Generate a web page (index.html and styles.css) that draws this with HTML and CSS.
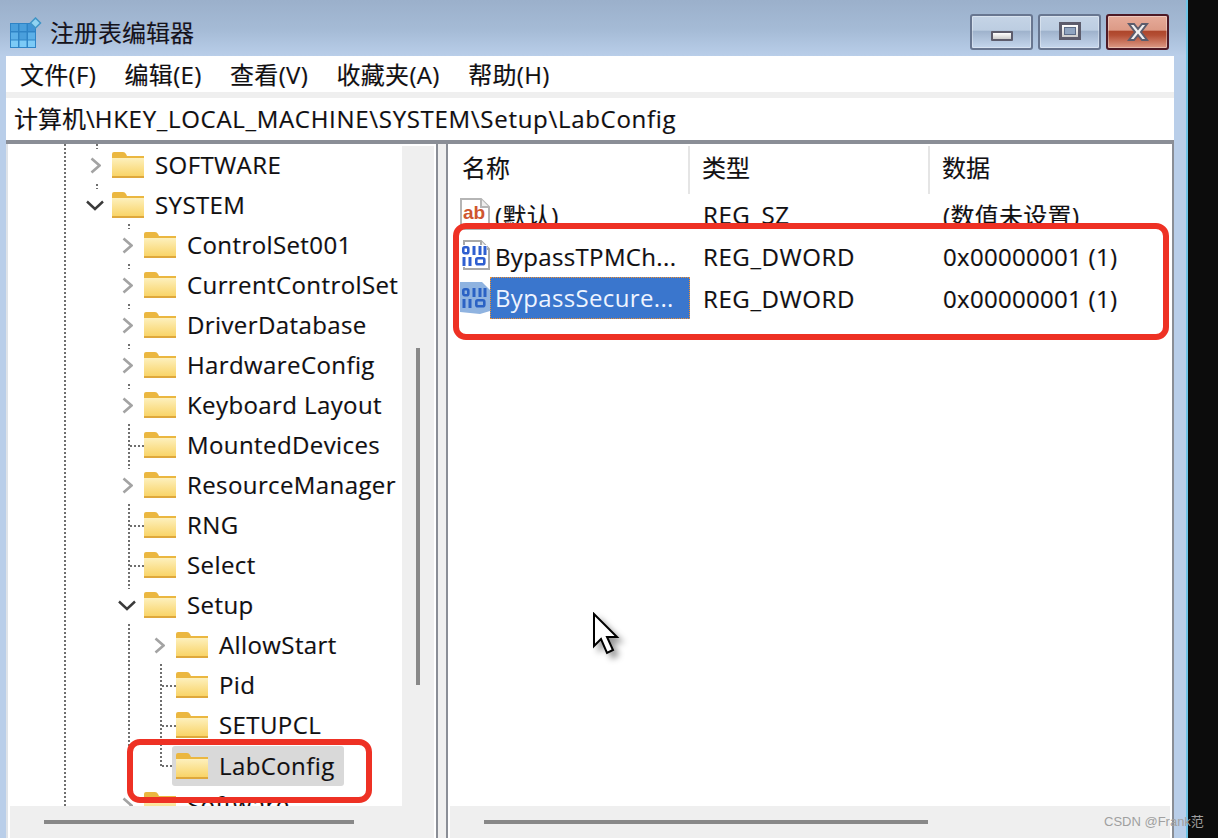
FILE: index.html
```html
<!DOCTYPE html>
<html lang="zh-CN">
<head>
<meta charset="utf-8">
<title>注册表编辑器</title>
<link rel="stylesheet" href="styles.css">
</head>
<body>
<svg class="defs" width="0" height="0" aria-hidden="true">
  <defs>
    <linearGradient id="fold" x1="0" y1="0" x2="0" y2="1">
      <stop offset="0" stop-color="#fdf0bd"/><stop offset="1" stop-color="#f9d468"/>
    </linearGradient>
    <symbol id="folder" viewBox="0 0 32 26">
      <path d="M0 2 Q0 0 2 0 H11 Q13 0 14 2 L15 4 H32 V8 H0Z" fill="#ebb740"/>
      <rect x="0" y="6" width="32" height="18" fill="url(#fold)"/>
      <rect x="0" y="24" width="32" height="2" fill="#dfa83c"/>
    </symbol>
    <symbol id="chev-r" viewBox="0 0 11 17">
      <path d="M1.500 1.500 L9.500 8.500 L1.500 15.500" fill="none" stroke="#a3a3a3" stroke-width="2.600"/>
    </symbol>
    <symbol id="chev-d" viewBox="0 0 18 11">
      <path d="M1 1.500 L9 9 L17 1.500" fill="none" stroke="#3a3a3a" stroke-width="2.400"/>
    </symbol>
    <symbol id="bin" viewBox="0 0 30 32">
      <path d="M4 1 H21 L29 9 V29 H4Z" fill="#fff" stroke="#a9a9a9" stroke-width="2"/>
      <path d="M21 1 V9 H29" fill="#eee" stroke="#a9a9a9" stroke-width="2"/>
      <rect x="1" y="5" width="26" height="22" fill="#fff"/>
      <g fill="none" stroke="#2f5fd0" stroke-width="2.600">
        <rect x="3.300" y="7.300" width="5" height="6" rx="1.500"/>
        <path d="M14 6 V15 M20 6 V15 M25 6 V15" stroke-width="3"/>
        <path d="M4 17 V26 M10 17 V26" stroke-width="3"/>
        <rect x="16.300" y="18.300" width="8" height="6" rx="1.500"/>
      </g>
    </symbol>
    <symbol id="bin-sel" viewBox="0 0 30 32">
      <path d="M0 0 H22 L30 8 V29 L20 32 L0 30Z" fill="#8fb3e0"/>
      <g fill="none" stroke="#2b62c4" stroke-width="2.600">
        <rect x="3.300" y="7.300" width="5" height="6" rx="1.500"/>
        <path d="M14 6 V15 M20 6 V15 M25 6 V15" stroke-width="3"/>
        <path d="M4 17 V26 M10 17 V26" stroke-width="3"/>
        <rect x="16.300" y="18.300" width="8" height="6" rx="1.500"/>
      </g>
    </symbol>
  </defs>
</svg>

<div class="window">
  <header class="titlebar">
    <svg class="app-icon" width="32" height="32" viewBox="0 0 32 32" aria-hidden="true">
      <rect x="0" y="6" width="26" height="25" fill="#2f84c6"/>
      <rect x="1" y="7" width="7" height="7" fill="#4a9fdc"/><rect x="9.500" y="7" width="7" height="7" fill="#4a9fdc"/><rect x="18" y="7" width="7" height="7" fill="#3f94d6"/>
      <rect x="1" y="15.500" width="7" height="7" fill="#5cb0e8"/><rect x="9.500" y="15.500" width="7" height="7" fill="#4a9fdc"/><rect x="18" y="15.500" width="7" height="7" fill="#5cb0e8"/>
      <rect x="1" y="23.500" width="7" height="6.500" fill="#7ccaf6"/><rect x="9.500" y="23.500" width="7" height="6.500" fill="#7ccaf6"/><rect x="18" y="23.500" width="7" height="6.500" fill="#7ccaf6"/>
      <path d="M25.500 1 L30.500 6 L25.500 11 L20.500 6Z" fill="#8fd3f2" stroke="#3f94c6" stroke-width="1.500"/>
    </svg>
    <span class="title-text">注册表编辑器</span>
    <div class="win-btns">
      <div class="win-btn"><span class="glyph-min"></span></div>
      <div class="win-btn"><span class="glyph-max"></span></div>
      <div class="win-btn win-close">
        <svg width="24" height="20" viewBox="0 0 24 20" aria-hidden="true">
          <path d="M3 2 H8 L12 7 L16 2 H21 L15 10 L21 18 H16 L12 13 L8 18 H3 L9 10Z" fill="#f0f0f0" stroke="#5c5c6c" stroke-width="2"/>
        </svg>
      </div>
    </div>
  </header>

  <div class="client">
    <nav class="menubar">
      <span class="menu-item">文件(F)</span>
      <span class="menu-item">编辑(E)</span>
      <span class="menu-item">查看(V)</span>
      <span class="menu-item">收藏夹(A)</span>
      <span class="menu-item">帮助(H)</span>
    </nav>
    <div class="strip"></div>
    <div class="address"><span>计算机\</span><span class="addr-path">HKEY_LOCAL_MACHINE\SYSTEM\Setup\LabConfig</span></div>

    <div class="panes">
      <section class="left-pane">
        <div class="tree-wrap">
          <div class="tree">
            <svg class="connectors" width="180" height="662" viewBox="0 0 180 662" aria-hidden="true">
              <g fill="none" stroke="#6f6f6f" stroke-width="2" stroke-dasharray="2 2">
                <path d="M57 0 V662"/>
                <path d="M89 0 V50"/>
                <path d="M121 80 V662"/>
                <path d="M122 302 H136 M122 382 H136 M122 422 H136"/>
                <path d="M153 520 V623"/>
                <path d="M154 542 H168 M154 582 H168 M154 622 H168"/>
              </g>
            </svg>
            <div class="row d1"><span class="exp"><svg width="11" height="17"><use href="#chev-r"/></svg></span><span class="node"><svg class="fld" width="32" height="26"><use href="#folder"/></svg><span class="lbl">SOFTWARE</span></span></div>
            <div class="row d1"><span class="exp"><svg width="18" height="11"><use href="#chev-d"/></svg></span><span class="node"><svg class="fld" width="32" height="26"><use href="#folder"/></svg><span class="lbl">SYSTEM</span></span></div>
            <div class="row d2"><span class="exp"><svg width="11" height="17"><use href="#chev-r"/></svg></span><span class="node"><svg class="fld" width="32" height="26"><use href="#folder"/></svg><span class="lbl">ControlSet001</span></span></div>
            <div class="row d2"><span class="exp"><svg width="11" height="17"><use href="#chev-r"/></svg></span><span class="node"><svg class="fld" width="32" height="26"><use href="#folder"/></svg><span class="lbl">CurrentControlSet</span></span></div>
            <div class="row d2"><span class="exp"><svg width="11" height="17"><use href="#chev-r"/></svg></span><span class="node"><svg class="fld" width="32" height="26"><use href="#folder"/></svg><span class="lbl">DriverDatabase</span></span></div>
            <div class="row d2"><span class="exp"><svg width="11" height="17"><use href="#chev-r"/></svg></span><span class="node"><svg class="fld" width="32" height="26"><use href="#folder"/></svg><span class="lbl">HardwareConfig</span></span></div>
            <div class="row d2"><span class="exp"><svg width="11" height="17"><use href="#chev-r"/></svg></span><span class="node"><svg class="fld" width="32" height="26"><use href="#folder"/></svg><span class="lbl">Keyboard Layout</span></span></div>
            <div class="row d2"><span class="exp"></span><span class="node"><svg class="fld" width="32" height="26"><use href="#folder"/></svg><span class="lbl">MountedDevices</span></span></div>
            <div class="row d2"><span class="exp"><svg width="11" height="17"><use href="#chev-r"/></svg></span><span class="node"><svg class="fld" width="32" height="26"><use href="#folder"/></svg><span class="lbl">ResourceManager</span></span></div>
            <div class="row d2"><span class="exp"></span><span class="node"><svg class="fld" width="32" height="26"><use href="#folder"/></svg><span class="lbl">RNG</span></span></div>
            <div class="row d2"><span class="exp"></span><span class="node"><svg class="fld" width="32" height="26"><use href="#folder"/></svg><span class="lbl">Select</span></span></div>
            <div class="row d2"><span class="exp"><svg width="18" height="11"><use href="#chev-d"/></svg></span><span class="node"><svg class="fld" width="32" height="26"><use href="#folder"/></svg><span class="lbl">Setup</span></span></div>
            <div class="row d3"><span class="exp"><svg width="11" height="17"><use href="#chev-r"/></svg></span><span class="node"><svg class="fld" width="32" height="26"><use href="#folder"/></svg><span class="lbl">AllowStart</span></span></div>
            <div class="row d3"><span class="exp"></span><span class="node"><svg class="fld" width="32" height="26"><use href="#folder"/></svg><span class="lbl">Pid</span></span></div>
            <div class="row d3"><span class="exp"></span><span class="node"><svg class="fld" width="32" height="26"><use href="#folder"/></svg><span class="lbl">SETUPCL</span></span></div>
            <div class="row d3"><span class="exp"></span><span class="node node-current"><svg class="fld" width="32" height="26"><use href="#folder"/></svg><span class="lbl">LabConfig</span></span></div>
            <div class="row d2"><span class="exp"><svg width="11" height="17"><use href="#chev-r"/></svg></span><span class="node"><svg class="fld" width="32" height="26"><use href="#folder"/></svg><span class="lbl">Software</span></span></div>
          </div>
          <div class="vscroll"><div class="vthumb"></div></div>
        </div>
        <div class="hscroll hscroll-left"><div class="hthumb thumb-left"></div></div>
      </section>

      <div class="splitter"></div>

      <section class="right-pane">
        <div class="list">
          <div class="list-head">
            <div class="hcell c-name">名称</div>
            <div class="hcell c-type">类型</div>
            <div class="hcell c-data">数据</div>
          </div>
          <div class="list-row">
            <div class="cell c-name">
              <svg class="val-icon" width="30" height="32" viewBox="0 0 30 32" aria-hidden="true">
                <path d="M1 1 H21 L29 9 V31 H1Z" fill="#fff" stroke="#b5b5b5" stroke-width="2"/>
                <path d="M21 1 V9 H29" fill="#eee" stroke="#b5b5b5" stroke-width="2"/>
                <text class="ab" x="3" y="21">ab</text>
              </svg>
              <span class="val-name">(默认)</span>
            </div>
            <div class="cell c-type">REG_SZ</div>
            <div class="cell c-data">(数值未设置)</div>
          </div>
          <div class="list-row">
            <div class="cell c-name">
              <svg class="val-icon" width="30" height="32"><use href="#bin"/></svg>
              <span class="val-name">BypassTPMCh...</span>
            </div>
            <div class="cell c-type">REG_DWORD</div>
            <div class="cell c-data">0x00000001 (1)</div>
          </div>
          <div class="list-row">
            <div class="cell c-name">
              <svg class="val-icon" width="30" height="32"><use href="#bin-sel"/></svg>
              <span class="val-name val-selected">BypassSecure...</span>
            </div>
            <div class="cell c-type">REG_DWORD</div>
            <div class="cell c-data">0x00000001 (1)</div>
          </div>
        </div>
        <div class="hscroll hscroll-right"><div class="hthumb thumb-right"></div></div>
      </section>
    </div>
  </div>
</div>

<div class="mark mark-tree"></div>
<div class="mark mark-values"></div>

<svg class="cursor" width="30" height="48" viewBox="0 0 30 48" aria-hidden="true">
  <path d="M2 2 V34 L9 27 L15 41 L21 38 L15 25 H25Z" fill="#fff" stroke="#000" stroke-width="2" stroke-linejoin="miter"/>
</svg>

<div class="watermark">CSDN @Frank范</div>
</body>
</html>
```
FILE: styles.css
```css
* { box-sizing: border-box; }
html, body { margin: 0; height: 100%; }
body {
  width: 1218px;
  height: 838px;
  overflow: hidden;
  position: relative;
  background: #0c0c0c;
  font-family: "Open Sans", "Noto Sans CJK SC", sans-serif;
  font-size: 24px;
  color: #111;
  text-shadow: 0.5px 0 0 rgba(40, 90, 220, .28), -0.5px 0 0 rgba(220, 130, 30, .28);
}
.defs { position: absolute; }
.window {
  width: 1188px;
  height: 838px;
  display: flex;
  flex-direction: column;
  padding-left: 6px;
  position: relative;
  background: linear-gradient(#9bb0cb 0, #a5bbd6 30px, #b9cee9 56px, #b9cee9 100%);
}
.window::after {
  content: "";
  position: absolute;
  top: 0; right: 0; bottom: 0;
  width: 2px;
  background: #6fc4e6;
}
.titlebar {
  height: 56px;
  flex: none;
  display: flex;
  align-items: flex-start;
  padding: 17px 0 0 4px;
}
.app-icon { flex: none; }
.title-text { margin-left: 8px; line-height: 32px; color: #14141c; }
.win-btns { margin-left: auto; margin-right: 19px; margin-top: -3px; display: flex; gap: 5px; }
.win-btn {
  width: 63px;
  height: 36px;
  border: 2px solid #687690;
  border-radius: 3px;
  display: flex;
  align-items: center;
  justify-content: center;
  background: linear-gradient(#c5d4e6 0, #bccde1 45%, #9db1cb 46%, #a8bbd4 60%, #c4d6ec 100%);
  box-shadow: inset 0 0 0 1px rgba(255, 255, 255, .35);
}
.win-close {
  border-color: #4e1a26;
  background: linear-gradient(#e6ab9a 0, #dc9a86 45%, #ad452a 46%, #b44e34 60%, #dd9a86 100%);
}
.glyph-min {
  width: 22px; height: 10px; margin-top: 8px;
  border: 2px solid #5c5c6c;
  background: linear-gradient(#fff, #ccc);
  border-radius: 1px;
}
.glyph-max {
  width: 22px; height: 18px; margin-top: -2px;
  border: 3px solid #5c5c6c;
  background: linear-gradient(#fff, #ccc);
  display: flex; align-items: center; justify-content: center;
}
.glyph-max::after {
  content: "";
  width: 10px; height: 6px;
  background: #8fa4c0;
  border: 1px solid #5c6c88;
}
.client {
  width: 1168px;
  flex: 1;
  min-height: 0;
  display: flex;
  flex-direction: column;
  background: #fff;
}
.menubar {
  height: 36px;
  flex: none;
  display: flex;
  align-items: center;
  padding: 2px 0 0 14px;
  gap: 28.500px;
  background: #fff;
}
.menu-item { line-height: 34px; letter-spacing: .3px; }
.strip { height: 6px; flex: none; background: #efefef; }
.address {
  height: 42px;
  flex: none;
  margin: 0 2px;
  padding-left: 6px;
  line-height: 42px;
  background: #fff;
  white-space: nowrap;
}
.addr-path { letter-spacing: .7px; }
.panes {
  flex: 1;
  min-height: 0;
  display: flex;
  border-top: 4px solid #8a8e96;
  border-right: 2px solid #8a8e96;
  background: #efefef;
}
.left-pane {
  width: 432px;
  flex: none;
  display: flex;
  flex-direction: column;
  border-left: 2px solid #dfe3e8;
  border-right: 2px solid #8a8e96;
  background: #fff;
}
.tree-wrap { flex: 1; min-height: 0; display: flex; }
.tree {
  width: 394px;
  flex: none;
  overflow: hidden;
  position: relative;
  padding-top: 1px;
}
.connectors { position: absolute; left: 0; top: 0; }
.row {
  height: 40px;
  display: flex;
  align-items: center;
  position: relative;
  white-space: nowrap;
}
.d1 { padding-left: 72px; }
.d2 { padding-left: 104px; }
.d3 { padding-left: 136px; }
.exp { width: 28px; flex: none; padding-left: 2px; display: flex; justify-content: center; align-items: center; }
.exp svg { display: block; box-sizing: content-box; padding: 8px 3px; background: #fff; }
.exp svg[height="11"] { padding: 11px 3px; }
.node {
  height: 40px;
  display: flex;
  align-items: center;
  gap: 11px;
  padding: 0 9px 0 4px;
  border-radius: 3px;
}
.lbl { letter-spacing: .4px; margin-top: -2px; }
.node-current { background: #d9d9d9; margin-top: 2px; }
.fld { flex: none; display: block; }
.vscroll {
  width: 32px;
  flex: none;
  background: #efefef;
  margin-top: 2px;
  display: flex;
  flex-direction: column;
  align-items: center;
}
.vthumb { width: 4px; height: 337px; margin-top: 202px; background: #888; }
.hscroll { height: 32px; flex: none; background: #efefef; display: flex; align-items: center; }
.hscroll-left { margin: 0 2px; }
.hthumb { height: 4px; background: #888; }
.thumb-left { width: 310px; margin-left: 34px; }
.thumb-right { width: 444px; margin-left: 34px; }
.splitter { width: 8px; flex: none; background: #efefef; }
.right-pane {
  flex: 1;
  min-width: 0;
  display: flex;
  flex-direction: column;
  border-left: 2px solid #8a8e96;
  background: #fff;
}
.list { flex: 1; min-height: 0; }
.list-head { height: 49px; display: flex; align-items: flex-start; padding-top: 2px; }
.hcell {
  height: 48px;
  line-height: 44px;
  border-right: 2px solid #e5e5e5;
}
.hcell.c-name { width: 242px; padding-left: 14px; }
.hcell.c-type { width: 240px; padding-left: 12px; }
.hcell.c-data { flex: 1; padding-left: 12px; border-right: 0; }
.list-row { height: 42px; display: flex; align-items: center; white-space: nowrap; }
.cell.c-name { width: 242px; display: flex; align-items: center; padding-left: 12px; height: 42px; }
.cell.c-type { width: 240px; padding-left: 13px; letter-spacing: .6px; }
.cell.c-data { flex: 1; padding-left: 13px; letter-spacing: .3px; }
.val-icon { flex: none; display: block; }
.val-name { margin-left: 5px; letter-spacing: .35px; }
.ab { font: 700 19px "Liberation Sans", sans-serif; fill: #cf5630; text-shadow: none; }
.val-selected {
  margin-left: 0;
  width: 200px;
  height: 42px;
  padding-left: 4px;
  line-height: 40px;
  background: #3a76cd;
  color: #eef4ff;
  border: 1px dotted #f09030;
  text-shadow: none;
}
.hscroll-right { margin: 0 2px; }
.mark {
  position: absolute;
  border: 6px solid #ee3124;
  border-radius: 13px;
}
.mark-tree { left: 127px; top: 739px; width: 245px; height: 64px; }
.mark-values { left: 453px; top: 223px; width: 716px; height: 117px; }
.cursor {
  position: absolute;
  left: 592px;
  top: 612px;
  filter: drop-shadow(5px 5px 3px rgba(0, 0, 0, .4));
}
.watermark {
  position: absolute;
  left: 1104px;
  top: 813px;
  font: 13px/18px "Liberation Sans", "Noto Sans CJK SC", sans-serif;
  color: #a0a0a0;
  text-shadow: none;
  white-space: nowrap;
}
```
